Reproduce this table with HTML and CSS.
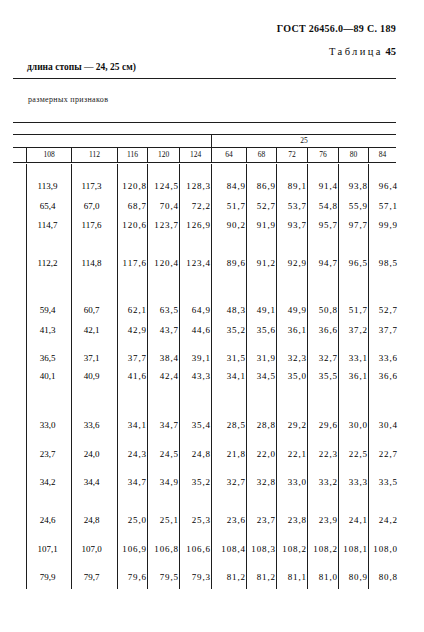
FILE: index.html
```html
<!DOCTYPE html>
<html lang="ru">
<head>
<meta charset="utf-8">
<title>ГОСТ 26456.0—89 С. 189</title>
<link rel="stylesheet" href="styles.css">
</head>
<body>
<div class="page">
  <header class="doc-head">
    <div class="gost">ГОСТ 26456.0—89 С. 189</div>
    <div class="tab"><span class="spaced">Таблица</span> <b>45</b></div>
  </header>
  <div class="caption">длина стопы — 24, 25 см)</div>
  <div class="rule thick"></div>
  <div class="sub">размерных признаков</div>
  <div class="rule r-sub"></div>
  <div class="rule r-gap"></div>
  <div class="group-row"><div></div><div class="g-right">25</div></div>
  <div class="rule"></div>
  <div class="grid hrow">
    <div class="c0"></div>
    <div>108</div><div>112</div><div>116</div><div>120</div><div>124</div>
    <div>64</div><div>68</div><div>72</div><div>76</div><div>80</div><div>84</div>
  </div>
  <div class="rule"></div>
  <div class="tbody">
    <div class="grid row p16"><div class="c0"></div><div class="l1">113,9</div><div class="l2">117,3</div><div>120,8</div><div>124,5</div><div>128,3</div><div>84,9</div><div>86,9</div><div>89,1</div><div>91,4</div><div>93,8</div><div>96,4</div></div>
    <div class="grid row p8"><div class="c0"></div><div class="l1">65,4</div><div class="l2">67,0</div><div>68,7</div><div>70,4</div><div>72,2</div><div>51,7</div><div>52,7</div><div>53,7</div><div>54,8</div><div>55,9</div><div>57,1</div></div>
    <div class="grid row p7"><div class="c0"></div><div class="l1">114,7</div><div class="l2">117,6</div><div>120,6</div><div>123,7</div><div>126,9</div><div>90,2</div><div>91,9</div><div>93,7</div><div>95,7</div><div>97,7</div><div>99,9</div></div>
    <div class="grid row p26"><div class="c0"></div><div class="l1">112,2</div><div class="l2">114,8</div><div>117,6</div><div>120,4</div><div>123,4</div><div>89,6</div><div>91,2</div><div>92,9</div><div>94,7</div><div>96,5</div><div>98,5</div></div>
    <div class="grid row p35"><div class="c0"></div><div class="l1">59,4</div><div class="l2">60,7</div><div>62,1</div><div>63,5</div><div>64,9</div><div>48,3</div><div>49,1</div><div>49,9</div><div>50,8</div><div>51,7</div><div>52,7</div></div>
    <div class="grid row p8"><div class="c0"></div><div class="l1">41,3</div><div class="l2">42,1</div><div>42,9</div><div>43,7</div><div>44,6</div><div>35,2</div><div>35,6</div><div>36,1</div><div>36,6</div><div>37,2</div><div>37,7</div></div>
    <div class="grid row p16"><div class="c0"></div><div class="l1">36,5</div><div class="l2">37,1</div><div>37,7</div><div>38,4</div><div>39,1</div><div>31,5</div><div>31,9</div><div>32,3</div><div>32,7</div><div>33,1</div><div>33,6</div></div>
    <div class="grid row p6"><div class="c0"></div><div class="l1">40,1</div><div class="l2">40,9</div><div>41,6</div><div>42,4</div><div>43,3</div><div>34,1</div><div>34,5</div><div>35,0</div><div>35,5</div><div>36,1</div><div>36,6</div></div>
    <div class="grid row p37"><div class="c0"></div><div class="l1">33,0</div><div class="l2">33,6</div><div>34,1</div><div>34,7</div><div>35,4</div><div>28,5</div><div>28,8</div><div>29,2</div><div>29,6</div><div>30,0</div><div>30,4</div></div>
    <div class="grid row p17"><div class="c0"></div><div class="l1">23,7</div><div class="l2">24,0</div><div>24,3</div><div>24,5</div><div>24,8</div><div>21,8</div><div>22,0</div><div>22,1</div><div>22,3</div><div>22,5</div><div>22,7</div></div>
    <div class="grid row p16"><div class="c0"></div><div class="l1">34,2</div><div class="l2">34,4</div><div>34,7</div><div>34,9</div><div>35,2</div><div>32,7</div><div>32,8</div><div>33,0</div><div>33,2</div><div>33,3</div><div>33,5</div></div>
    <div class="grid row p26"><div class="c0"></div><div class="l1">24,6</div><div class="l2">24,8</div><div>25,0</div><div>25,1</div><div>25,3</div><div>23,6</div><div>23,7</div><div>23,8</div><div>23,9</div><div>24,1</div><div>24,2</div></div>
    <div class="grid row p17"><div class="c0"></div><div class="l1">107,1</div><div class="l2">107,0</div><div>106,9</div><div>106,8</div><div>106,6</div><div>108,4</div><div>108,3</div><div>108,2</div><div>108,2</div><div>108,1</div><div>108,0</div></div>
    <div class="grid row p16 last"><div class="c0"></div><div class="l1">79,9</div><div class="l2">79,7</div><div>79,6</div><div>79,5</div><div>79,3</div><div>81,2</div><div>81,2</div><div>81,1</div><div>81,0</div><div>80,9</div><div>80,8</div></div>
  </div>
</div>
</body>
</html>
```

FILE: styles.css
```css
html, body {
  margin: 0;
  padding: 0;
  background: #ffffff;
}

body {
  font-family: "Liberation Serif", "DejaVu Serif", serif;
  color: #0d0d0d;
}

.page {
  width: 383px;
  margin-left: 13px;
  padding-top: 23px;
}

.doc-head {
  text-align: right;
}

.gost {
  font-weight: bold;
  font-size: 10px;
  line-height: 12px;
  letter-spacing: 0.3px;
}

.tab {
  margin-top: 11px;
  font-size: 10.5px;
  line-height: 12px;
}

.tab .spaced {
  letter-spacing: 2.4px;
}

.tab b {
  font-weight: bold;
}

.caption {
  margin-top: 3px;
  padding-left: 14px;
  font-weight: bold;
  font-size: 9.5px;
  line-height: 12px;
}

.rule {
  height: 0;
  border-top: 1px solid #1e1e1e;
}

.rule.thick {
  margin-top: 5px;
  border-top-width: 1.5px;
}

.sub {
  margin-top: 15px;
  padding-left: 15px;
  font-size: 8px;
  line-height: 12px;
  letter-spacing: 0.35px;
  color: #1a1a1a;
}

.rule.r-sub {
  margin-top: 16px;
}

.rule.r-gap {
  margin-top: 11px;
}

.group-row {
  display: grid;
  grid-template-columns: 198px 185px;
  height: 12px;
  font-size: 7.5px;
  line-height: 12px;
}

.group-row .g-right {
  border-left: 1px solid #222;
  text-align: center;
}

.grid {
  display: grid;
  grid-template-columns: 13px 45px 46px 30px 32px 32px 35px 30px 31px 31px 30px 28px;
}

.grid > div {
  border-left: 1px solid #1e1e1e;
}

.grid > .c0 {
  border-left: none;
}

.hrow {
  height: 14px;
  font-size: 7.5px;
  line-height: 14px;
  text-align: center;
}

.tbody {
  padding-top: 1px;
}

.row > div {
  font-size: 9px;
  line-height: 12px;
  text-align: right;
  letter-spacing: 0.9px;
  white-space: nowrap;
  color: #000;
}

.row > .l1 {
  text-align: center;
  letter-spacing: 0;
  padding-right: 3px;
}

.row > .l2 {
  text-align: center;
  letter-spacing: 0;
  padding-right: 6px;
}

.row > div:last-child {
  margin-right: -2px;
}

.p6 > div { padding-top: 6px; }
.p7 > div { padding-top: 7px; }
.p8 > div { padding-top: 8px; }
.p16 > div { padding-top: 16px; }
.p17 > div { padding-top: 17px; }
.p26 > div { padding-top: 26px; }
.p35 > div { padding-top: 35px; }
.p37 > div { padding-top: 37px; }

.row.last > div {
  padding-bottom: 6px;
}
```
